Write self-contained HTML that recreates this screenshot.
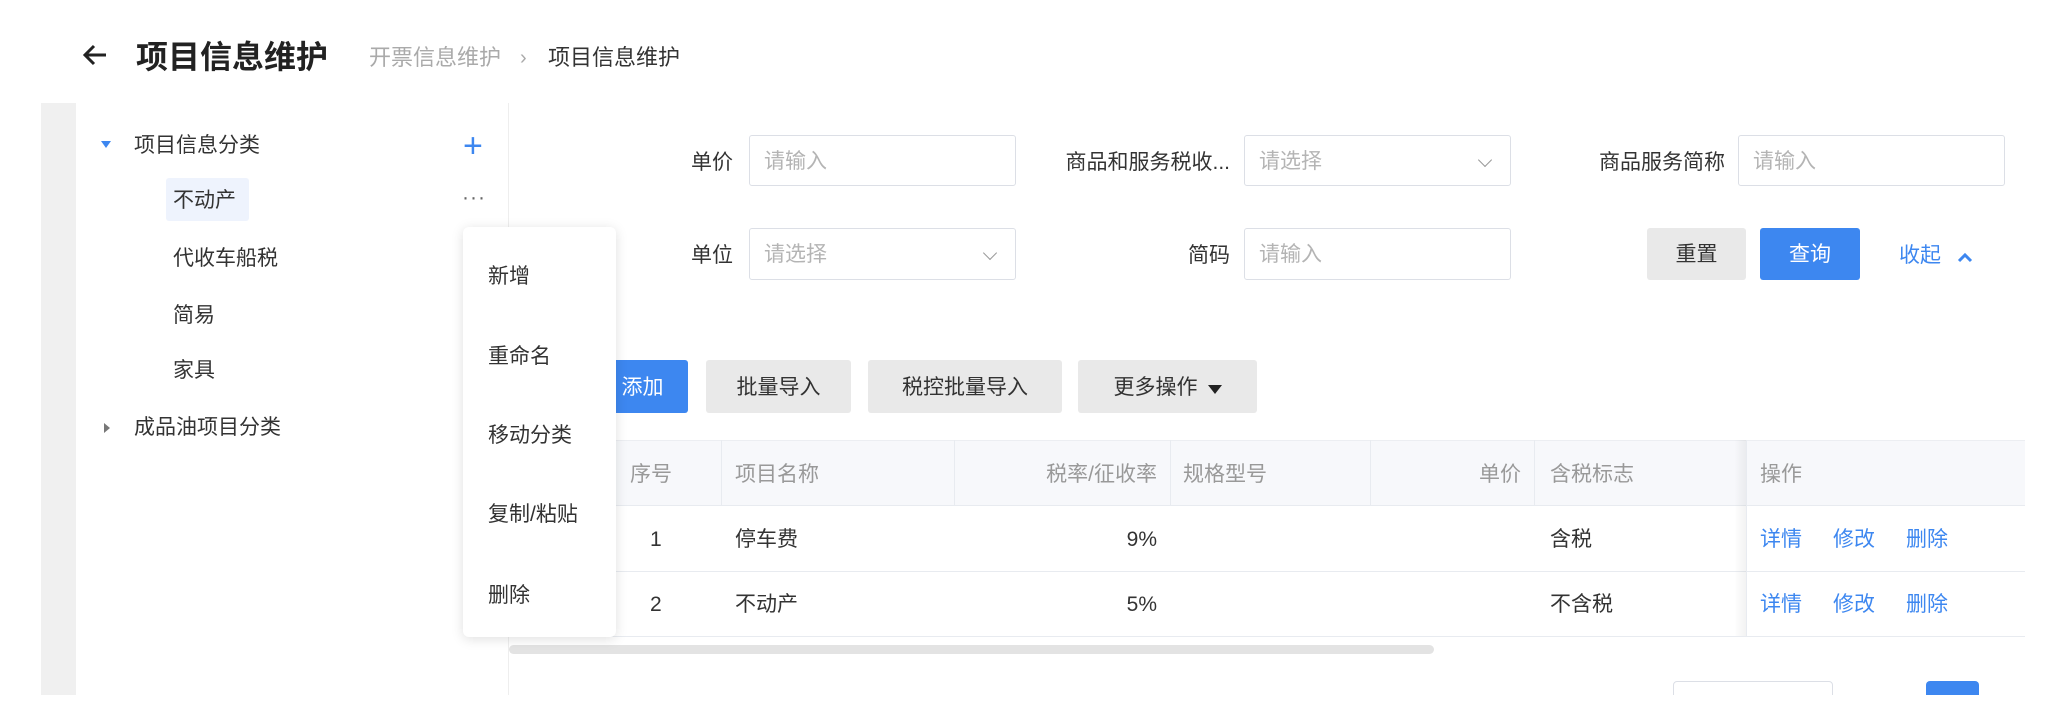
<!DOCTYPE html>
<html><head><meta charset="utf-8"><style>
*{margin:0;padding:0;box-sizing:border-box}
body{width:2068px;height:724px;background:#fff;position:relative;overflow:hidden;font-family:"Liberation Sans","Noto Sans CJK SC",sans-serif;font-size:21px;color:#333}
.a{position:absolute;white-space:nowrap}
.inp{position:absolute;border:1px solid #dcdfe6;border-radius:3px;background:#fff;color:#b4b4b4;font-size:21px;padding-left:14px;line-height:52px}
.lbl{position:absolute;text-align:right;line-height:55px}
.btn{position:absolute;border-radius:3px;background:#e9e9e9;color:#333;text-align:center;font-size:21px}
.chev{position:absolute;right:20px;top:19px;width:10px;height:10px;border-right:1.5px solid #999;border-bottom:1.5px solid #999;transform:rotate(45deg)}
.th{position:absolute;top:442px;height:66px;line-height:66px;color:#999}
.td{position:absolute;line-height:68px}
.lk{color:#3d87f0}
.vl{position:absolute;top:440px;height:66px;width:1px;background:#e8ebf0}
</style></head><body>
<svg class="a" style="left:82px;top:43px" width="26" height="24" viewBox="0 0 26 24"><path d="M24 12H4M12 3L3 12l9 9" fill="none" stroke="#222" stroke-width="3"/></svg>
<div class="a" style="left:136px;top:36px;font-size:32px;font-weight:bold;color:#222;line-height:42px">项目信息维护</div>
<div class="a" style="left:369px;top:43px;font-size:22px;color:#aaa;line-height:30px">开票信息维护</div>
<div class="a" style="left:520px;top:43px;font-size:20px;color:#aaa;line-height:30px">›</div>
<div class="a" style="left:548px;top:43px;font-size:22px;color:#333;line-height:30px">项目信息维护</div>
<div class="a" style="left:41px;top:103px;width:35px;height:592px;background:#f0f0f0"></div>
<div class="a" style="left:508px;top:103px;width:1px;height:592px;background:#eee"></div>
<div class="a" style="left:101px;top:141px;width:0;height:0;border-left:5px solid transparent;border-right:5px solid transparent;border-top:7px solid #3d87f0"></div>
<div class="a" style="left:134px;top:131px;line-height:30px">项目信息分类</div>
<div class="a" style="left:463px;top:131px;font-size:34px;color:#3d87f0;line-height:30px;font-weight:300">+</div>
<div class="a" style="left:166px;top:178px;width:83px;height:43px;background:#eef3fd;border-radius:3px"></div>
<div class="a" style="left:173px;top:186px;line-height:30px">不动产</div>
<div class="a" style="left:462px;top:183px;color:#666;line-height:30px;letter-spacing:1px">···</div>
<div class="a" style="left:173px;top:244px;line-height:30px">代收车船税</div>
<div class="a" style="left:173px;top:301px;line-height:30px">简易</div>
<div class="a" style="left:173px;top:356px;line-height:30px">家具</div>
<div class="a" style="left:104px;top:423px;width:0;height:0;border-top:5px solid transparent;border-bottom:5px solid transparent;border-left:6px solid #777"></div>
<div class="a" style="left:134px;top:413px;line-height:30px">成品油项目分类</div>
<div class="lbl" style="left:620px;width:113px;top:135px">单价</div>
<div class="inp" style="left:749px;top:135px;width:267px;height:51px">请输入</div>
<div class="lbl" style="left:620px;width:113px;top:228px">单位</div>
<div class="inp" style="left:749px;top:228px;width:267px;height:52px">请选择<span class="chev"></span></div>
<div class="lbl" style="left:1000px;width:230px;top:135px">商品和服务税收...</div>
<div class="inp" style="left:1244px;top:135px;width:267px;height:51px">请选择<span class="chev"></span></div>
<div class="lbl" style="left:1000px;width:230px;top:228px">简码</div>
<div class="inp" style="left:1244px;top:228px;width:267px;height:52px">请输入</div>
<div class="lbl" style="left:1500px;width:225px;top:135px">商品服务简称</div>
<div class="inp" style="left:1738px;top:135px;width:267px;height:51px">请输入</div>
<div class="btn" style="left:1647px;top:228px;width:99px;height:52px;line-height:54px">重置</div>
<div class="btn" style="left:1760px;top:228px;width:100px;height:52px;line-height:54px;background:#3d87f0;color:#fff">查询</div>
<div class="a" style="left:1899px;top:230px;line-height:52px;color:#3d87f0">收起</div>
<svg class="a" style="left:1957px;top:251px" width="16" height="12" viewBox="0 0 16 12"><path d="M2 10l6-6 6 6" fill="none" stroke="#3d87f0" stroke-width="3"/></svg>
<div class="btn" style="left:567px;top:360px;width:121px;height:53px;line-height:56px;background:#3d87f0;color:#fff;padding-left:30px">添加</div>
<div class="btn" style="left:706px;top:360px;width:145px;height:53px;line-height:56px">批量导入</div>
<div class="btn" style="left:868px;top:360px;width:194px;height:53px;line-height:56px">税控批量导入</div>
<div class="btn" style="left:1078px;top:360px;width:179px;height:53px;line-height:56px;padding-right:24px">更多操作</div>
<div class="a" style="left:1208px;top:385px;width:0;height:0;border-left:7px solid transparent;border-right:7px solid transparent;border-top:9px solid #222"></div>
<div class="a" style="left:540px;top:440px;width:1485px;height:66px;background:#f7f8fb;border-top:1px solid #eceef2"></div>
<div class="a" style="left:540px;top:505px;width:1485px;height:1px;background:#e8ebf0"></div>
<div class="a" style="left:540px;top:571px;width:1485px;height:1px;background:#e8ebf0"></div>
<div class="a" style="left:540px;top:636px;width:1485px;height:1px;background:#e8ebf0"></div>
<div class="vl" style="left:721px"></div><div class="vl" style="left:954px"></div><div class="vl" style="left:1170px"></div><div class="vl" style="left:1370px"></div><div class="vl" style="left:1534px"></div>
<div class="a" style="left:1734px;top:440px;width:12px;height:196px;background:linear-gradient(90deg,rgba(0,0,0,0),rgba(0,0,0,0.05))"></div>
<div class="a" style="left:1746px;top:440px;width:1px;height:196px;background:#e8ebf0"></div>
<div class="th" style="left:630px">序号</div>
<div class="th" style="left:735px">项目名称</div>
<div class="th" style="left:954px;width:203px;text-align:right">税率/征收率</div>
<div class="th" style="left:1183px">规格型号</div>
<div class="th" style="left:1370px;width:151px;text-align:right">单价</div>
<div class="th" style="left:1550px">含税标志</div>
<div class="th" style="left:1760px">操作</div>
<div class="td" style="left:650px;top:506px">1</div>
<div class="td" style="left:735px;top:506px">停车费</div>
<div class="td" style="left:954px;top:506px;width:203px;text-align:right">9%</div>
<div class="td" style="left:1550px;top:506px">含税</div>
<div class="td lk" style="left:1760px;top:506px">详情</div><div class="td lk" style="left:1833px;top:506px">修改</div><div class="td lk" style="left:1906px;top:506px">删除</div>
<div class="td" style="left:650px;top:571px">2</div>
<div class="td" style="left:735px;top:571px">不动产</div>
<div class="td" style="left:954px;top:571px;width:203px;text-align:right">5%</div>
<div class="td" style="left:1550px;top:571px">不含税</div>
<div class="td lk" style="left:1760px;top:571px">详情</div><div class="td lk" style="left:1833px;top:571px">修改</div><div class="td lk" style="left:1906px;top:571px">删除</div>
<div class="a" style="left:509px;top:645px;width:925px;height:9px;border-radius:5px;background:#e3e3e3"></div>
<div class="a" style="left:1673px;top:681px;width:160px;height:30px;border:1px solid #dcdfe6;border-radius:4px"></div>
<div class="a" style="left:1926px;top:681px;width:53px;height:30px;background:#3d87f0;border-radius:4px"></div>
<div class="a" style="left:0;top:695px;width:2068px;height:29px;background:#fff"></div>
<div class="a" style="left:463px;top:227px;width:153px;height:410px;background:#fff;border-radius:6px;box-shadow:0 2px 12px rgba(0,0,0,0.13)"></div>
<div class="a" style="left:488px;top:262px;line-height:30px">新增</div>
<div class="a" style="left:488px;top:342px;line-height:30px">重命名</div>
<div class="a" style="left:488px;top:421px;line-height:30px">移动分类</div>
<div class="a" style="left:488px;top:500px;line-height:30px">复制/粘贴</div>
<div class="a" style="left:488px;top:581px;line-height:30px">删除</div>
</body></html>
